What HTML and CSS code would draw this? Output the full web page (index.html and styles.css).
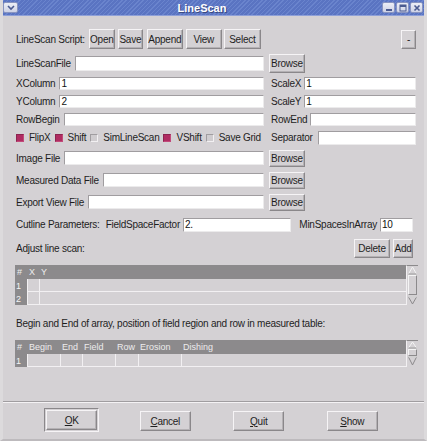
FILE: index.html
```html
<!DOCTYPE html>
<html>
<head>
<meta charset="utf-8">
<link rel="stylesheet" href="styles.css">
</head>
<body>
<div class="window">
  <div class="titlebar">
    <div class="tb-btn tb-menu">
      <svg width="8" height="6" viewBox="0 0 8 6"><path d="M1 1 L4 4 L7 1" fill="none" stroke="#4a5a90" stroke-width="1.6"/></svg>
    </div>
    <div class="title">LineScan</div>
    <div class="tb-right">
      <div class="tb-btn"><svg width="8" height="8" viewBox="0 0 8 8"><rect x="1" y="5" width="6" height="2" fill="#4a5a90"/></svg></div>
      <div class="tb-btn"><svg width="8" height="8" viewBox="0 0 8 8"><rect x="1" y="1" width="6" height="6" fill="none" stroke="#4a5a90" stroke-width="1"/><rect x="1" y="1" width="6" height="2" fill="#4a5a90"/></svg></div>
      <div class="tb-btn"><svg width="8" height="8" viewBox="0 0 8 8"><path d="M1.5 1.5 L6.5 6.5 M6.5 1.5 L1.5 6.5" stroke="#4a5a90" stroke-width="1.6"/></svg></div>
    </div>
  </div>

  <div class="body">
    <div class="row r-script">
      <span class="lbl">LineScan Script:</span>
      <span class="btn w-open">Open</span>
      <span class="btn w-save">Save</span>
      <span class="btn w-append">Append</span>
      <span class="btn w-view">View</span>
      <span class="btn w-select">Select</span>
      <span class="btn w-minus">-</span>
    </div>

    <div class="row r-file r-first">
      <div class="left"><span class="lbl">LineScanFile</span><span class="entry"></span></div>
      <span class="btn browse">Browse</span>
    </div>

    <div class="row r-pair r-x">
      <div class="left"><span class="lbl">XColumn</span><span class="entry">1</span></div>
      <div class="right"><span class="lbl">ScaleX</span><span class="entry">1</span></div>
    </div>
    <div class="row r-pair">
      <div class="left"><span class="lbl">YColumn</span><span class="entry">2</span></div>
      <div class="right"><span class="lbl">ScaleY</span><span class="entry">1</span></div>
    </div>
    <div class="row r-pair">
      <div class="left"><span class="lbl">RowBegin</span><span class="entry"></span></div>
      <div class="right"><span class="lbl">RowEnd</span><span class="entry"></span></div>
    </div>

    <div class="row r-check">
      <div class="left checks">
        <span class="cb on"></span><span class="cbl">FlipX</span>
        <span class="cb on"></span><span class="cbl">Shift</span>
        <span class="cb"></span><span class="cbl">SimLineScan</span>
        <span class="cb on"></span><span class="cbl">VShift</span>
        <span class="cb"></span><span class="cbl">Save Grid</span>
      </div>
      <div class="right"><span class="lbl">Separator</span><span class="entry"></span></div>
    </div>

    <div class="row r-file r-img">
      <div class="left"><span class="lbl">Image File</span><span class="entry"></span></div>
      <span class="btn browse">Browse</span>
    </div>
    <div class="row r-file r-next">
      <div class="left"><span class="lbl">Measured Data File</span><span class="entry"></span></div>
      <span class="btn browse">Browse</span>
    </div>
    <div class="row r-file r-next">
      <div class="left"><span class="lbl">Export View File</span><span class="entry"></span></div>
      <span class="btn browse">Browse</span>
    </div>

    <div class="row r-cut">
      <span class="lbl">Cutline Parameters:</span>
      <span class="lbl fsf">FieldSpaceFactor</span>
      <span class="entry">2.</span>
      <span class="lbl msa">MinSpacesInArray</span>
      <span class="entry small">10</span>
    </div>

    <div class="row r-adjust">
      <span class="lbl">Adjust line scan:</span>
      <span class="btn w-delete">Delete</span>
      <span class="btn w-add">Add</span>
    </div>

    <div class="table t1">
      <div class="grid g1">
        <div class="hd">#</div><div class="hd">X</div><div class="hd">Y</div>
        <div class="rh">1</div><div class="cell"></div><div class="cell"></div>
        <div class="rh">2</div><div class="cell"></div><div class="cell"></div>
      </div>
      <div class="sbar">
        <svg class="arr" width="11" height="9" viewBox="0 0 11 9"><path d="M1.5 8 L5.5 1 L9.5 8 Z" fill="none" stroke="#f4f4f4" stroke-width="1"/><path d="M9.5 8 L1.5 8" stroke="#8c8a8c"/></svg>
        <div class="slider s1"></div>
        <div class="trough"></div>
        <svg class="arr" width="11" height="9" viewBox="0 0 11 9"><path d="M1.5 1 L5.5 8 L9.5 1 Z" fill="none" stroke="#8c8a8c" stroke-width="1"/><path d="M1.5 1 L9.5 1" stroke="#f4f4f4"/></svg>
      </div>
    </div>

    <div class="row r-text">
      <span class="lbl">Begin and End of array, position of field region and row in measured table:</span>
    </div>

    <div class="table t2">
      <div class="grid g2">
        <div class="hd">#</div><div class="hd">Begin</div><div class="hd">End</div><div class="hd">Field</div><div class="hd">Row</div><div class="hd">Erosion</div><div class="hd">Dishing</div>
        <div class="rh">1</div><div class="cell"></div><div class="cell"></div><div class="cell"></div><div class="cell"></div><div class="cell"></div><div class="cell"></div>
      </div>
      <div class="sbar">
        <svg class="arr" width="11" height="8" viewBox="0 0 11 8"><path d="M1.5 7 L5.5 1 L9.5 7 Z" fill="none" stroke="#f4f4f4" stroke-width="1"/><path d="M9.5 7 L1.5 7" stroke="#8c8a8c"/></svg>
        <div class="slider s2"></div>
        <svg class="arr" width="11" height="10" viewBox="0 0 11 10"><path d="M1.5 1 L5.5 9 L9.5 1 Z" fill="none" stroke="#8c8a8c" stroke-width="1"/><path d="M1.5 1 L9.5 1" stroke="#f4f4f4"/></svg>
      </div>
    </div>

    <div class="bottom">
      <div class="sep"></div>
      <div class="actions">
        <div class="slot"><span class="default"><span class="btn act"><u>O</u>K</span></span></div>
        <div class="slot"><span class="btn act"><u>C</u>ancel</span></div>
        <div class="slot"><span class="btn act"><u>Q</u>uit</span></div>
        <div class="slot"><span class="btn act"><u>S</u>how</span></div>
      </div>
    </div>
  </div>
</div>
</body>
</html>
```

FILE: styles.css
```css
html, body {
  margin: 0;
  padding: 0;
  background: #d4d1d4;
}
.window {
  width: 427px;
  height: 441px;
  background: #d4d1d4;
  display: flex;
  flex-direction: column;
  font-family: "Liberation Sans", Arial, sans-serif;
  font-size: 10px;
  letter-spacing: -0.25px;
  color: #1e1e1e;
  box-sizing: border-box;
  border-left: 3px solid #dcdadc;
  border-right: 3px solid #dcdadc;
  border-bottom: 2px solid #bdbabd;
  overflow: hidden;
}
.titlebar {
  height: 15px;
  margin: 0 -3px;
  display: flex;
  align-items: center;
  background: repeating-linear-gradient(135deg, #5a74c2 0px, #5a74c2 2px, #6a84cd 2px, #6a84cd 3px);
  border-bottom: 1px solid #8ea0d8;
  flex: none;
}
.tb-btn {
  width: 13px;
  height: 11px;
  background: linear-gradient(#eceef6, #cdd2e6);
  border: 1px solid #8894c0;
  border-radius: 2px;
  box-sizing: border-box;
  display: flex;
  align-items: center;
  justify-content: center;
}
.tb-menu {
  margin-left: 3px;
  width: 15px;
}
.title {
  flex: 1;
  text-align: center;
  color: #fff;
  font-weight: bold;
  font-size: 11px;
  letter-spacing: 0;
  text-shadow: 1px 1px 0 #3a4a80;
  padding-left: 4px;
}
.tb-right {
  display: flex;
  gap: 1px;
  margin-right: 4px;
}
.tb-right .tb-btn { width: 13px; }

.body {
  flex: 1;
  display: flex;
  flex-direction: column;
  padding: 0 8px 0 12px;
}
.row {
  display: flex;
  align-items: center;
  flex: none;
}
.lbl { white-space: nowrap; }

.btn {
  box-sizing: border-box;
  display: inline-flex;
  align-items: center;
  justify-content: center;
  background: #d4d1d4;
  border: 1px solid;
  border-color: #f6f4f6 #8a878a #8a878a #f6f4f6;
  box-shadow: inset -1px -1px 0 #b4b1b4;
  white-space: nowrap;
  color: #1e1e1e;
}

.r-script {
  margin-top: 13px;
  height: 20px;
  padding-left: 1px;
}
.r-script .btn { height: 20px; margin-left: 3px; }
.r-script .w-open { margin-left: 4px; width: 26px; }
.w-save { width: 25px; }
.w-append { width: 36px; margin-left: 4px !important; }
.w-view { width: 36px; }
.w-select { width: 37px; margin-left: 2px !important; }
.w-minus { width: 15px; height: 19px !important; margin-left: auto !important; }

.left {
  width: 249px;
  display: flex;
  align-items: center;
  padding-left: 1px;
  box-sizing: border-box;
  flex: none;
}
.right {
  width: 147px;
  margin-left: 5px;
  display: flex;
  align-items: center;
  padding-left: 2px;
  box-sizing: border-box;
  flex: none;
}
.entry {
  flex: 1;
  height: 14px;
  box-sizing: border-box;
  background: #ffffff;
  border: 1px solid;
  border-color: #a09da0 #ecebec #ecebec #a09da0;
  margin-left: 4px;
  padding-left: 1px;
  display: flex;
  align-items: center;
  font-size: 10px;
  color: #111;
}
.browse {
  width: 36px;
  margin-left: 5px;
  height: 18px;
}

.r-first { margin-top: 5px; height: 19px; }
.r-first .browse { height: 19px; }
.r-first .entry { height: 15px; }

.r-pair { height: 13px; margin-top: 5px; }
.r-pair .entry { height: 13px; }
.r-x { margin-top: 4px; }
.r-pair .right .entry { margin-left: 3px; }

.r-check { height: 13px; margin-top: 5px; }
.checks { padding-left: 1px; }
.cb {
  width: 8px;
  height: 8px;
  box-sizing: border-box;
  background: #cfcccf;
  border: 1px solid;
  border-color: #a09da0 #f2f0f2 #f2f0f2 #a09da0;
  flex: none;
}
.cb.on {
  background: #b02c62;
  border-color: #8c2450 #c24a7a #c24a7a #8c2450;
}
.cbl { margin-left: 5px; margin-right: 4px; white-space: nowrap; }
.r-check .right .entry { margin-left: 5px; }

.r-img { margin-top: 5px; height: 18px; }
.r-next { margin-top: 4px; height: 18px; }
.r-img .browse, .r-next .browse { height: 17px; }

.r-cut { margin-top: 6px; height: 15px; padding-left: 1px; }
.r-cut .fsf { margin-left: 6px; }
.r-cut .entry { height: 14px; margin-left: 3px; }
.r-cut .msa { margin-left: 8px; }
.r-cut .entry.small { flex: none; width: 33px; margin-left: 3px; margin-right: 3px; }

.r-adjust { margin-top: 7px; height: 19px; padding-left: 1px; }
.w-delete { width: 36px; height: 19px; margin-left: auto; }
.w-add { width: 20px; height: 19px; margin-left: 3px; margin-right: 3px; }

.table {
  display: flex;
  flex: none;
  width: 403px;
}
.t1 { margin-top: 7px; height: 40px; }
.t2 { margin-top: 11px; height: 27px; }
.grid {
  flex: 1;
  display: grid;
  font-size: 9px;
  letter-spacing: 0;
}
.g1 {
  grid-template-columns: 12px 12px 1fr;
  grid-template-rows: 14px 13px 13px;
}
.g2 {
  grid-template-columns: 12px 33px 22px 33px 23px 43px 1fr;
  grid-template-rows: 14px 13px;
}
.hd {
  background: #8c8a8c;
  color: #ececec;
  padding-left: 2px;
  display: flex;
  align-items: center;
}
.rh {
  background: #8c8a8c;
  color: #f4f4f4;
  padding-left: 1px;
  display: flex;
  align-items: center;
}
.cell {
  background: #d4d1d4;
  border-left: 1px solid #f2f0f2;
  border-bottom: 1px solid #f2f0f2;
}
.sbar {
  width: 11px;
  display: flex;
  flex-direction: column;
  background: #d4d1d4;
  border-left: 1px solid #f2f0f2;
  border-top: 1px solid #8c8a8c;
}
.arr { display: block; flex: none; }
.slider {
  box-sizing: border-box;
  border: 1px solid;
  border-color: #f4f4f4 #8c8a8c #8c8a8c #f4f4f4;
  margin: 0 1px;
}
.s1 { height: 20px; }
.trough { flex: 1; }
.s2 { height: 7px; }

.r-text { margin-top: 12px; height: 12px; padding-left: 1px; }

.bottom {
  margin-top: auto;
  margin-left: -12px;
  margin-right: -8px;
  display: flex;
  flex-direction: column;
}
.sep {
  height: 0;
  border-top: 1px solid #a09da0;
  border-bottom: 1px solid #f4f2f4;
}
.actions {
  display: grid;
  grid-template-columns: repeat(4, 93.5px);
  padding-left: 22px;
  height: 31px;
  margin-top: 5px;
  margin-bottom: 0;
}
.slot {
  display: flex;
  justify-content: center;
  align-items: flex-start;
  padding-top: 3px;
}
.act { width: 51px; height: 20px; }
.act u { text-decoration: underline; }
.default {
  display: inline-flex;
  padding: 1px;
  margin-top: -3px;
  border: 1px solid;
  border-color: #8a878a #f6f4f6 #f6f4f6 #8a878a;
}
```
